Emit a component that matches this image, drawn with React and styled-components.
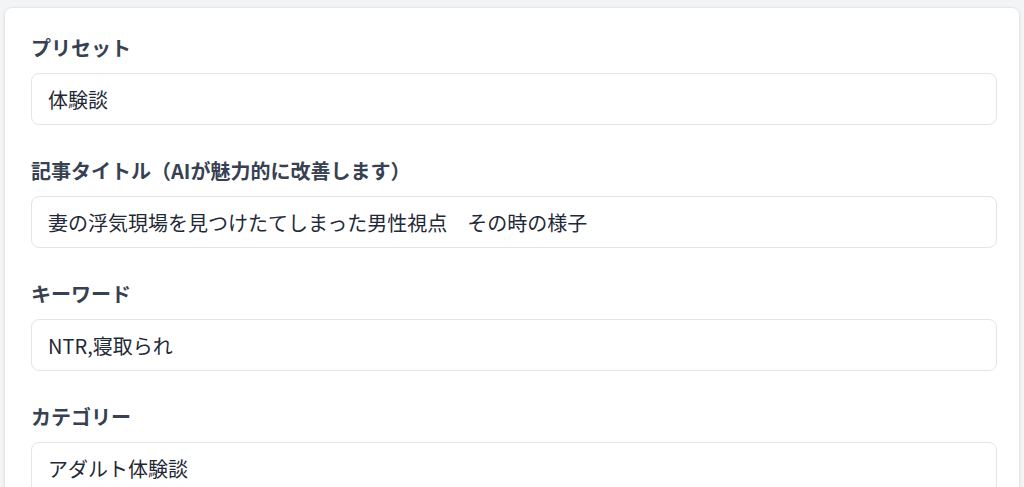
import React from "react";
import styled, { createGlobalStyle } from "styled-components";

const Global = createGlobalStyle`
  html, body {
    margin: 0;
    padding: 0;
    background: #f3f4f6;
  }
  body {
    font-family: "Noto Sans CJK JP", "Noto Sans", sans-serif;
  }
`;

const Page = styled.div`
  padding: 7px 4px 0 4px;
  height: 487px;
  box-sizing: border-box;
  overflow: hidden;
`;

const Card = styled.div`
  background: #ffffff;
  border: 1px solid #e5e7eb;
  border-radius: 8px;
  box-shadow: 0 1px 3px rgba(0, 0, 0, 0.08);
  padding: 25px 22px 40px 26px;
  display: flex;
  flex-direction: column;
  gap: 31px;
`;

const Field = styled.div`
  display: flex;
  flex-direction: column;
  gap: 10px;
`;

const Label = styled.label`
  font-size: 20px;
  line-height: 30px;
  font-weight: 700;
  color: #374151;
`;

const Input = styled.input`
  box-sizing: border-box;
  width: 100%;
  height: 52px;
  padding: 0 16px;
  border: 1px solid #e2e5ea;
  border-radius: 8px;
  background: #ffffff;
  font-family: "Noto Sans CJK JP", "Noto Sans", sans-serif;
  font-size: 20px;
  color: #1f2937;
  outline: none;
`;

const fields = [
  { label: "プリセット", value: "体験談" },
  { label: "記事タイトル（AIが魅力的に改善します）", value: "妻の浮気現場を見つけたてしまった男性視点　その時の様子" },
  { label: "キーワード", value: "NTR,寝取られ" },
  { label: "カテゴリー", value: "アダルト体験談" },
];

export default function App() {
  return (
    <>
      <Global />
      <Page>
        <Card>
          {fields.map((f) => (
            <Field key={f.label}>
              <Label>{f.label}</Label>
              <Input defaultValue={f.value} readOnly />
            </Field>
          ))}
        </Card>
      </Page>
    </>
  );
}
